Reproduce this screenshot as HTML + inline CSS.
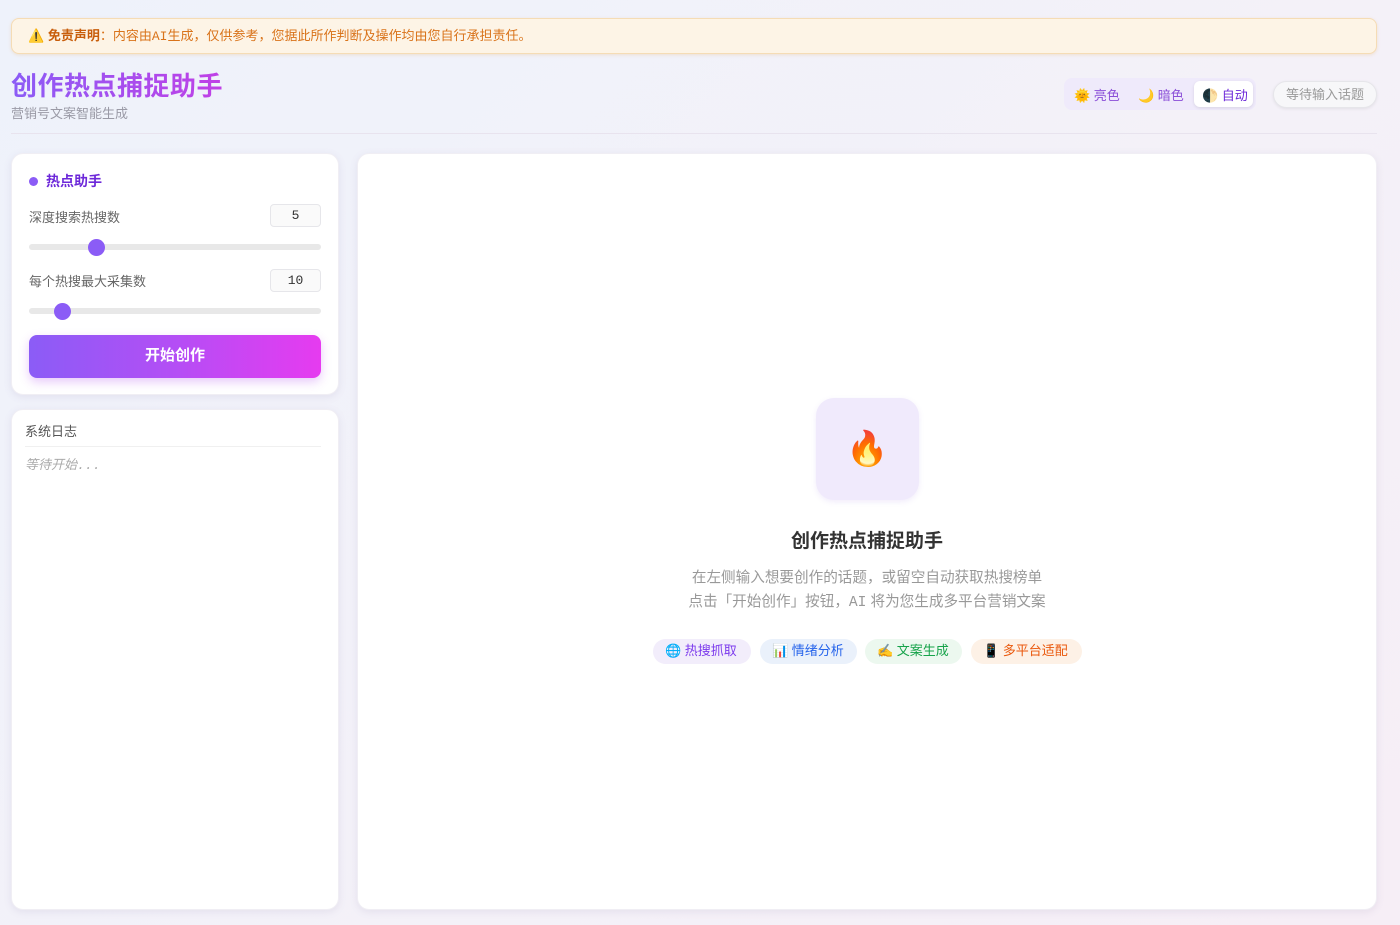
<!DOCTYPE html>
<html><head><meta charset="utf-8"><style>
*{box-sizing:border-box;margin:0;padding:0}
body{width:1400px;height:925px;overflow:hidden;font-family:"Liberation Sans","Noto Sans CJK SC",sans-serif;background:linear-gradient(135deg,#eef2fb 0%,#f4f1f8 60%,#f6eef6 100%);position:relative;color:#333}
.warn{position:absolute;left:11px;top:18px;width:1366px;height:36px;background:#fdf4e6;border:1px solid #f5dcb5;border-radius:8px;box-shadow:0 1px 3px rgba(230,170,90,.25);font-size:13px;color:#d9731a;line-height:34px;padding-left:16px}
.warn b{color:#c85d0a}
.mono{font-family:"Liberation Mono","Noto Sans CJK SC",monospace}
h1{position:absolute;left:11px;top:66px;font-size:26px;font-weight:700;background:linear-gradient(90deg,#8b5cf6,#c040e6);-webkit-background-clip:text;color:transparent;letter-spacing:0.5px}
.sub{position:absolute;left:11px;top:103px;font-size:13px;color:#9a9aa6}
.theme{position:absolute;left:1064px;top:78px;width:192px;height:32px;background:#efeafb;border-radius:8px;font-size:13px;color:#8b4fd8}
.theme span{position:absolute;top:7px}
.theme .act{position:absolute;left:130px;top:3px;width:59px;height:26px;background:#fff;border-radius:6px;box-shadow:0 1px 3px rgba(0,0,0,.1);color:#6d28d9;padding:4px 0 0 8px}
.wait{position:absolute;left:1273px;top:81px;width:104px;height:27px;border-radius:14px;background:#f7f7f9;border:1px solid #e6e6ea;box-shadow:0 1px 3px rgba(0,0,0,.08);font-size:13px;color:#999;text-align:center;line-height:25px}
.hr{position:absolute;left:11px;top:133px;width:1366px;height:1px;background:#e8e3ee}
.card{position:absolute;background:#fff;border-radius:12px;box-shadow:0 2px 8px rgba(120,110,160,.12);border:1px solid #f0eef4}
.lbl{position:absolute;left:17px;font-size:13px;color:#666}
.num{position:absolute;left:258px;width:51px;height:23px;border:1px solid #e6e6ea;border-radius:4px;background:#fafafa;font-family:"Liberation Mono",monospace;font-size:13px;text-align:center;line-height:21px}
.track{position:absolute;left:17px;width:292px;height:6px;border-radius:3px;background:#e8e8e8}
.knob{position:absolute;width:17px;height:17px;border-radius:50%;background:#8b5cf6}
.btn{position:absolute;left:17px;top:181px;width:292px;height:43px;border-radius:8px;background:linear-gradient(90deg,#8b5cf6,#b44ef5 50%,#e63bf0);color:#fff;font-size:15px;font-weight:700;text-align:center;line-height:41px;box-shadow:0 4px 10px rgba(180,80,240,.3)}
.chip{position:absolute;top:639px;height:25px;border-radius:13px;font-size:13px;line-height:24px;padding-left:12px}
</style></head><body>
<div class="warn">⚠️ <b>免责声明</b>：内容由<span class="mono">AI</span>生成，仅供参考，您据此所作判断及操作均由您自行承担责任。</div>
<h1>创作热点捕捉助手</h1>
<div class="sub">营销号文案智能生成</div>
<div class="theme"><span style="left:10px">🌞 亮色</span><span style="left:74px">🌙 暗色</span><div class="act">🌓 自动</div></div>
<div class="wait">等待输入话题</div>
<div class="hr"></div>

<div class="card" style="left:11px;top:153px;width:328px;height:242px">
<div style="position:absolute;left:17px;top:23px;width:9px;height:9px;border-radius:50%;background:#8b5cf6"></div>
<div style="position:absolute;left:34px;top:17px;font-size:14px;font-weight:700;color:#6d28d9">热点助手</div>
<div class="lbl" style="top:53px">深度搜索热搜数</div>
<div class="num" style="top:50px">5</div>
<div class="track" style="top:90px"></div><div class="knob" style="left:76px;top:85px"></div>
<div class="lbl" style="top:117px">每个热搜最大采集数</div>
<div class="num" style="top:115px">10</div>
<div class="track" style="top:154px"></div><div class="knob" style="left:42px;top:149px"></div>
<div class="btn">开始创作</div>
</div>

<div class="card" style="left:11px;top:409px;width:328px;height:501px">
<div style="position:absolute;left:13px;top:11px;font-size:13px;color:#555">系统日志</div>
<div style="position:absolute;left:13px;top:36px;width:296px;height:1px;background:#f0f0f0"></div>
<div class="mono" style="position:absolute;left:13px;top:44px;font-size:13px;color:#aaa;font-style:italic">等待开始...</div>
</div>

<div class="card" style="left:357px;top:153px;width:1020px;height:757px"></div>
<div style="position:absolute;left:816px;top:398px;width:103px;height:102px;border-radius:18px;background:#f0eafc;text-align:center;line-height:102px;font-size:34px;box-shadow:0 2px 6px rgba(140,100,220,.12)">🔥</div>
<div style="position:absolute;left:0;width:1734px;top:526px;text-align:center;font-size:19px;font-weight:700;color:#333">创作热点捕捉助手</div>
<div style="position:absolute;left:0;width:1734px;top:566px;text-align:center;font-size:14.6px;color:#999;line-height:24px">在左侧输入想要创作的话题，或留空自动获取热搜榜单<br>点击「开始创作」按钮，<span class="mono">AI</span> 将为您生成多平台营销文案</div>
<div class="chip" style="left:653px;width:98px;background:#f2edfb;color:#7c3aed">🌐 热搜抓取</div>
<div class="chip" style="left:760px;width:97px;background:#eaf1fb;color:#2563eb">📊 情绪分析</div>
<div class="chip" style="left:865px;width:97px;background:#ecf8ef;color:#16a34a">✍️ 文案生成</div>
<div class="chip" style="left:971px;width:111px;background:#fdf1e6;color:#ea580c">📱 多平台适配</div>
</body></html>
